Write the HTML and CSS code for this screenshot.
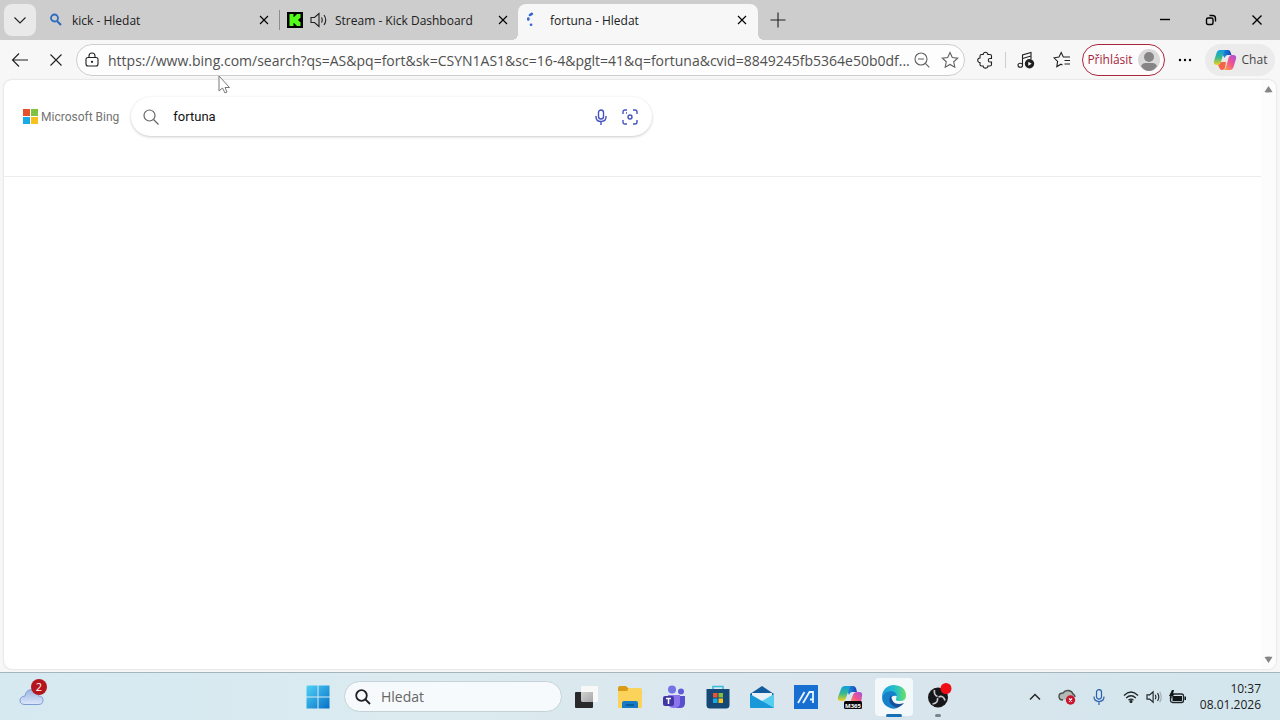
FILE: index.html
```html
<!DOCTYPE html>
<html lang="cs">
<head>
<meta charset="utf-8">
<title>fortuna - Hledat</title>
<link rel="stylesheet" href="styles.css">
</head>
<body>
<header class="tabbar">
  <button class="tab-menu" aria-label="Nabídka karet"><svg class="line" width="16" height="16" viewBox="0 0 16 16"><path d="M2.500 5.500 8 11l5.500-5.500"/></svg></button>
  <div class="tab">
    <svg class="favicon" width="16" height="16" viewBox="0 0 16 16" fill="none" stroke="#2b6cc0" stroke-width="1.800"><circle cx="6.500" cy="6" r="3.500"/><path d="m9 9 4 4" stroke-width="2.200"/></svg>
    <span class="tab-title">kick - Hledat</span>
    <button class="tab-close" aria-label="Zavřít kartu"><svg class="line" width="10" height="10" viewBox="0 0 10 10"><path d="m1 1 8 8M9 1 1 9"/></svg></button>
  </div>
  <div class="tab tab-divided">
    <svg class="favicon" width="16" height="16" viewBox="0 0 16 16"><path fill="#000" d="M0 0h16v16H0z"/><path fill="#53fc18" d="M2.500 2h4v3h1V4h1V3h1V2h4v4h-1v1h-1v2h1v1h1v4h-4v-1h-1v-1h-1v-1h-1v3h-4z"/></svg>
    <svg class="line speaker" width="18" height="16" viewBox="0 0 18 16"><path d="M1 5.500h3.500l4.500-4v13l-4.500-4H1zM11.500 5.500q1.500 2.500 0 5M14 3q3.500 5 0 10"/></svg>
    <span class="tab-title">Stream - Kick Dashboard</span>
    <button class="tab-close" aria-label="Zavřít kartu"><svg class="line" width="10" height="10" viewBox="0 0 10 10"><path d="m1 1 8 8M9 1 1 9"/></svg></button>
  </div>
  <div class="tab tab-active">
    <svg class="favicon" width="16" height="16" viewBox="0 0 16 16" fill="none" stroke="#3565d0" stroke-width="2.600" stroke-linecap="round"><path d="M4 3 5.800 1.800M2.300 6.500v1M5 12.800h.1"/></svg>
    <span class="tab-title">fortuna - Hledat</span>
    <button class="tab-close" aria-label="Zavřít kartu"><svg class="line" width="10" height="10" viewBox="0 0 10 10"><path d="m1 1 8 8M9 1 1 9"/></svg></button>
  </div>
  <button class="tab-new" aria-label="Nová karta"><svg class="line" width="16" height="16" viewBox="0 0 16 16"><path d="M8 .5v15M.5 8h15"/></svg></button>
  <div class="window-controls">
    <button aria-label="Minimalizovat"><svg class="line heavy" width="12" height="12" viewBox="0 0 12 12"><path d="M1 5.500h10"/></svg></button>
    <button aria-label="Obnovit"><svg class="line heavy" width="12" height="12" viewBox="0 0 12 12"><rect x="1.500" y="4" width="6.500" height="6.500" rx="1.500"/><path d="M4.500 1.500h3q3 0 3 3v3"/></svg></button>
    <button aria-label="Zavřít"><svg class="line heavy" width="12" height="12" viewBox="0 0 12 12"><path d="m1.500 1.500 9 9M10.500 1.500l-9 9"/></svg></button>
  </div>
</header>

<nav class="toolbar">
  <button class="tool" aria-label="Zpět"><svg class="line" width="18" height="16" viewBox="0 0 18 16"><path d="M17 8H1.500M8 1.500 1.500 8 8 14.500"/></svg></button>
  <button class="tool" aria-label="Zastavit"><svg class="line" width="14" height="14" viewBox="0 0 14 14"><path d="m1.500 1.500 11 11M12.500 1.500l-11 11"/></svg></button>
  <form class="address">
    <svg class="line" width="14" height="16" viewBox="0 0 14 16"><rect x="1" y="5.500" width="12" height="8.500" rx="2"/><path d="M4 5.500V4q0-3 3-3t3 3v1.500"/><circle cx="7" cy="9.800" r=".6" fill="currentColor"/></svg>
    <input class="address-input" aria-label="Adresa" value="https://www.bing.com/search?qs=AS&amp;pq=fort&amp;sk=CSYN1AS1&amp;sc=16-4&amp;pglt=41&amp;q=fortuna&amp;cvid=8849245fb5364e50b0df...">
    <button type="button" class="address-action" aria-label="Oddálit"><svg class="line" width="18" height="18" viewBox="0 0 18 18"><circle cx="8" cy="8" r="6"/><path d="M5 8h6M12.300 12.300l4 4"/></svg></button>
    <button type="button" class="address-action" aria-label="Přidat k oblíbeným"><svg class="line" width="18" height="18" viewBox="0 0 18 18"><path d="m9 1.500 2.300 5 5.400.6-4 3.700 1.100 5.400L9 13.500l-4.800 2.700 1.100-5.400-4-3.700 5.400-.6z"/></svg></button>
  </form>
  <button class="tool" aria-label="Rozšíření"><svg class="line" width="18" height="18" viewBox="0 0 18 18"><path d="M5.500 3.500h1.700C7 .5 12 .5 11.800 3.500H14q1.500 0 1.500 1.500v2.500H14c-2.300 0-2.300 3.500 0 3.500h1.500v2.500q0 1.500-1.500 1.500h-2.200c.2 2.800-4.800 2.800-4.600 0H5.500Q4 15 4 13.500V11.500C1 11.500 1 7 4 7V5q0-1.500 1.500-1.500z"/></svg></button>
  <span class="separator"></span>
  <button class="tool" aria-label="Média"><svg class="line" width="18" height="18" viewBox="0 0 18 18"><path d="M5.500 14V4l8.500-2.500V8M5.500 7.500 14 5"/><ellipse cx="3.300" cy="14.300" rx="2.300" ry="2"/><circle cx="12.500" cy="12.800" r="4.700" fill="currentColor" stroke="none"/><path d="m11.300 10.800 3.300 2-3.300 2z" fill="#fff" stroke="none"/></svg></button>
  <button class="tool" aria-label="Oblíbené"><svg class="line" width="18" height="18" viewBox="0 0 18 18"><path d="M11 6H10.300L8.200 1.500 6 6l-5 .8 3.600 3.600-.8 5.200L8 13.200l1.500.8M11 6h6M11.500 9.500H17M11.500 13H17"/></svg></button>
  <button class="sign-in">Přihlásit<svg width="22" height="22" viewBox="0 0 22 22"><circle cx="11" cy="11" r="11" fill="#d9d9d9"/><circle cx="11" cy="8" r="5" fill="#858585"/><path d="M3 17q1.500-3 4.500-3h7q3 0 4.500 3-3 5-8 5t-8-5z" fill="#858585"/></svg></button>
  <button class="tool" aria-label="Další"><svg width="14" height="4" viewBox="0 0 14 4"><circle cx="2" cy="2" r="1.200"/><circle cx="7" cy="2" r="1.200"/><circle cx="12" cy="2" r="1.200"/></svg></button>
  <button class="chat"><svg width="24" height="22" viewBox="0 0 24 22">
    <defs>
      <linearGradient id="cpA" x1="0" y1="0" x2="0" y2="1"><stop offset="0" stop-color="#129fe0"/><stop offset=".5" stop-color="#36b98f"/><stop offset="1" stop-color="#f2d21c"/></linearGradient>
      <linearGradient id="cpB" x1="1" y1="0" x2="0" y2="1"><stop offset="0" stop-color="#a84ee0"/><stop offset=".5" stop-color="#f0548e"/><stop offset="1" stop-color="#ffa43c"/></linearGradient>
      <linearGradient id="cpC" x1="0" y1="0" x2="1" y2="0"><stop offset="0" stop-color="#20a6e8"/><stop offset="1" stop-color="#1742b8"/></linearGradient>
    </defs>
    <path fill="url(#cpC)" d="M7 1h8q2 0 2.500 2l1 3h-4q-2 0-3 3z"/>
    <path fill="url(#cpA)" d="M7 1h5q-1 1-1.500 3L8 13q-1 3-3 3H4q-4 0-3-4l2.500-8Q4.500 1 7 1z"/>
    <path fill="#f36544" d="M5 16q2 0 3-3h5l-1 6q-1 2-3 2t-2.500-2z"/>
    <path fill="url(#cpB)" d="M17 21h-6q1.500-1 2-3L15.500 9q1-3 3-3H20q4 0 3 4l-2.500 8q-1 3-3.500 3z"/>
  </svg>Chat</button>
</nav>

<div class="page">
  <main class="results">
    <div class="search-header">
      <a class="bing-logo" href="#"><svg width="15" height="15" viewBox="0 0 15 15"><path fill="#e6512b" d="M0 0h7v7H0z"/><path fill="#80c341" d="M8 0h7v7H8z"/><path fill="#1ba8e8" d="M0 8h7v7H0z"/><path fill="#f8c21c" d="M8 8h7v7H8z"/></svg>Microsoft Bing</a>
      <form class="search-box">
        <svg class="search-glass" width="16" height="16" viewBox="0 0 16 16"><circle cx="6.500" cy="6.500" r="5.500"/><path d="m10.500 10.500 5 5"/></svg>
        <input class="search-input" aria-label="Hledaný výraz" value="fortuna">
        <button type="button" class="search-action" aria-label="Hlasové hledání"><svg width="12" height="16" viewBox="0 0 12 16"><rect x="3.500" y="1" width="5" height="9" rx="2.500"/><path d="M1 7v1q0 4.500 5 4.500T11 8V7M6 12.500V16"/></svg></button>
        <button type="button" class="search-action" aria-label="Hledat podle obrázku"><svg width="16" height="16" viewBox="0 0 16 16"><path d="M1 5V3q0-2 2-2h2M11 1h2q2 0 2 2v2M15 11v2q0 2-2 2h-2M5 15H3q-2 0-2-2v-2M4 4h1"/><circle cx="8" cy="8" r="2"/></svg></button>
      </form>
    </div>
  </main>
  <div class="scrollbar">
    <svg width="9" height="7" viewBox="0 0 9 7"><path d="M4.500 0 8.500 6q-4 1-8 0z"/></svg>
    <svg width="9" height="7" viewBox="0 0 9 7"><path d="M4.500 7 8.500 1q-4-1-8 0z"/></svg>
  </div>
</div>

<footer class="taskbar">
  <button class="widgets" aria-label="Widgety">
    <svg width="26" height="18" viewBox="0 0 26 18"><defs><linearGradient id="cloud" x1="0" y1="0" x2="0" y2="1"><stop offset="0" stop-color="#9fb4e2"/><stop offset="1" stop-color="#dbe7fa"/></linearGradient></defs><path d="M6 16.500q-5 0-5-4t5-4.500Q7 1.500 13 1.500T19.500 8q4.500 0 4.500 4.300t-5 4.200z" fill="url(#cloud)" stroke="#7f9bd2"/></svg>
    <span class="badge">2</span>
  </button>
  <div class="apps">
    <button class="app" aria-label="Start"><svg width="24" height="24" viewBox="0 0 24 24"><defs><linearGradient id="win" x1="0" y1="0" x2="1" y2="1"><stop offset="0" stop-color="#4fd2f5"/><stop offset="1" stop-color="#0670c8"/></linearGradient></defs><path fill="url(#win)" d="M1.500.5h10v11h-11v-10zM12.500.5h11v11h-11zM.5 12.500h11v11h-11zM12.500 12.500h11v11h-11z"/></svg></button>
    <label class="task-search"><svg width="16" height="16" viewBox="0 0 16 16"><circle cx="6.500" cy="6.500" r="5.300"/><path d="m10.500 10.500 4.500 4.500"/></svg><input type="text" placeholder="Hledat" aria-label="Hledat"></label>
    <button class="app" aria-label="Zobrazení úkolů"><svg width="24" height="24" viewBox="0 0 24 24"><defs><linearGradient id="tv" x1="0" y1="0" x2="1" y2="1"><stop offset="0" stop-color="#d2d2d2"/><stop offset="1" stop-color="#a5a5a5"/></linearGradient></defs><rect x="7" y="1" width="17" height="16" rx="1" fill="#f8f8f8"/><rect x="1" y="7" width="18" height="16" rx="1" fill="#29292c"/><path fill="url(#tv)" d="M7 7h12v10H8l-1-1z"/></svg></button>
    <button class="app" aria-label="Průzkumník souborů"><svg width="26" height="24" viewBox="0 0 26 24"><path fill="#d99b16" d="M1 3q0-2 2-2h6l3 3v4H1z"/><path fill="#fbd35a" d="M1 6h9l2-3h11q2 0 2 2v17q0 1-1 1H2q-1 0-1-1z"/><path fill="#1679c4" d="M5 23v-5q0-2 2-2h12q2 0 2 2v5z"/><path d="M9 20h8" stroke="#085291" stroke-width="1.500"/></svg></button>
    <button class="app" aria-label="Teams"><svg width="24" height="24" viewBox="0 0 24 24"><circle cx="10" cy="4.500" r="4" fill="#7173e6"/><circle cx="19" cy="6.500" r="3" fill="#625cdb"/><path fill="#5750cd" d="M14 11h9v7q0 5-5 5h-4z"/><path fill="#8d73ee" d="M6 10h12v8q0 5-6 5t-6-5z"/><rect x="1" y="11" width="11" height="10" rx="2" fill="#4037a5"/><path d="M4 13.500h5M6.500 13.500V19" stroke="#fff" stroke-width="1.500"/></svg></button>
    <button class="app" aria-label="Microsoft Store"><svg width="24" height="24" viewBox="0 0 24 24"><path d="M7 5V1.500h10V5" fill="none" stroke="#35bde0" stroke-width="1.500"/><path fill="#164875" d="M.5 4h23v16q0 3.500-3.500 3.500H4Q.5 23.500.5 20z"/><path fill="#f05132" d="M7 8h4.500v4.500H7z"/><path fill="#82bd3c" d="M12.500 8H17v4.500h-4.500z"/><path fill="#19a8e9" d="M7 13.500h4.500V18H7z"/><path fill="#fcc51b" d="M12.500 13.500H17V18h-4.500z"/></svg></button>
    <button class="app" aria-label="Pošta"><svg width="26" height="24" viewBox="0 0 26 24"><path fill="#145b9e" d="m13 1 12 8v4H1V9z"/><path fill="#e9f1f6" d="M3 8h20v7H3z"/><path fill="#55cdf0" d="M25 9v14H1l12-7z"/><path fill="#1898d8" d="m1 9 24 14H2q-1 0-1-1z"/></svg></button>
    <button class="app" aria-label="MyASUS"><svg width="24" height="24" viewBox="0 0 24 24"><path fill="#1770d1" d="M0 0h24v24H0z"/><path d="m4 18 6.500-11M9 18l6.500-11H19v11M16 14.500h3" fill="none" stroke="#e9f5ff" stroke-width="1.800"/></svg></button>
    <button class="app" aria-label="Microsoft 365"><svg width="26" height="24" viewBox="0 0 26 24"><path fill="url(#cpC)" d="M8 1h8q2 0 3 2l1 4h-5q-2 0-3 3z"/><path fill="url(#cpA)" d="M8 1h6q-2 1-2 3l-3 9q-1 3-4 3H4q-4 0-3-4l3-8q1-3 4-3z"/><path fill="url(#cpB)" d="M12 18q2-1 2-3l2-5q1-3 4-3h2q4 0 3 4l-1 7z"/><rect x="7" y="16" width="18" height="8" rx="1.500" fill="#08080b"/><text x="16" y="22.500" text-anchor="middle" class="app-caption">M365</text></svg></button>
    <button class="app app-current" aria-label="Microsoft Edge"><svg width="26" height="24" viewBox="0 0 26 24"><defs><linearGradient id="edge" x1="0" y1="0" x2="1" y2="0"><stop offset="0" stop-color="#189fe2"/><stop offset=".6" stop-color="#2bc3c5"/><stop offset="1" stop-color="#6be060"/></linearGradient></defs><path fill="url(#edge)" d="M1 12C1 5 6 0 13 0q12 1 12 11 0 5-6 5-5 0-4-2 2-5-3-7Q4 5 1 12z"/><path fill="#1481c9" d="M1 12q2-6 8-6 6 0 7 5-7-1-6 5 1 7 8 6-4 3-9 1Q1 20 1 12z"/><path fill="#174f9e" d="M10 10q-4 7 2 11 5 4 11-3-12 4-13-8z"/></svg></button>
    <button class="app app-open" aria-label="OBS Studio"><svg width="28" height="28" viewBox="0 0 28 28"><circle cx="14" cy="14.500" r="10" fill="#171719"/><path d="M10.500 7q-1 5 3 6.500M14.500 14q5-2 6.500 3.500M13.500 15q1 5-5 6" fill="none" stroke="#c9c9cc" stroke-width="1.700"/><circle cx="22" cy="5.500" r="5.500" fill="#f10d15"/></svg></button>
  </div>
  <div class="tray">
    <button aria-label="Skryté ikony"><svg class="line" width="12" height="8" viewBox="0 0 12 8"><path d="m1 6.500 5-5 5 5" stroke-width="1.400"/></svg></button>
    <button aria-label="OneDrive"><svg width="18" height="16" viewBox="0 0 18 16"><path d="M5 11q-4 0-4-3.500T5 4q2-3 5.500-2.500T15 5q2 1 2 3" fill="#b5b9b4" stroke="#48504d" stroke-width="1.400"/><circle cx="12.500" cy="11" r="4.700" fill="#c91530"/><path d="m11 9.500 3 3m0-3-3 3" stroke="#fff" stroke-width="1.200"/></svg></button>
    <button aria-label="Mikrofon"><svg width="12" height="16" viewBox="0 0 12 16" fill="none" stroke="#285fae" stroke-width="1.200"><rect x="3.500" y=".6" width="5" height="9.500" rx="2.500"/><path d="M1 7.500q0 5 5 5t5-5M6 12.500V16"/></svg></button>
    <button class="tray-status" aria-label="Síť, zvuk a baterie">
      <svg width="16" height="12" viewBox="0 0 16 12" fill="none" stroke="#202628" stroke-width="1.300"><path d="M1 4.500q7-7 14 0M3.200 7q4.800-4.500 9.600 0M5.500 9.200q2.500-2 5 0"/><circle cx="8" cy="10.500" r=".9" fill="#202628"/></svg>
      <svg width="16" height="14" viewBox="0 0 18 16" fill="none" stroke="#202628" stroke-width="1.300"><path d="M1 5.500h3l4-3.500v12l-4-3.500H1zM10.500 5.500q1.500 2.500 0 5M13 3.500q3 4.500 0 9"/><path d="M15.500 2q3.500 6 0 12" stroke="#9fb0b5"/></svg>
      <svg width="18" height="14" viewBox="0 0 18 14"><rect x="1.500" y="4" width="13" height="8.500" rx="2" fill="none" stroke="#202628" stroke-width="1.300"/><path fill="#111718" d="M3.500 6h9.500v5h-9.500zM15.500 6.500h1.500v3.500h-1.500zM3 0 0 6h2.500L2 9l3.500-5H4L5 0z"/></svg>
    </button>
    <button class="clock"><span>10:37</span><span>08.01.2026</span></button>
  </div>
</footer>
<svg class="pointer" width="12" height="19" viewBox="0 0 12 19"><path d="M1 1v15l3.500-3 2.500 5 2-1-2-4.500h4.500z"/></svg>
</body>
</html>
```
FILE: styles.css
```css
* { box-sizing: border-box; }
body {
  margin: 0;
  min-height: 100vh;
  display: flex;
  flex-direction: column;
  background: #f7f7f7;
  color: #202020;
  font: 12px/16px "Open Sans", "Noto Sans", sans-serif;
}
button, input { font: inherit; color: inherit; border: 0; padding: 0; background: none; }
input { outline: 0; min-width: 0; height: 24px; }
button {
  display: flex;
  align-items: center;
  justify-content: center;
  flex-shrink: 0;
}
svg { flex-shrink: 0; }
.line { fill: none; stroke: currentColor; stroke-width: 1.1; }
.heavy { stroke: #000; stroke-width: 1.4; }

.tabbar { display: flex; height: 40px; padding-left: 4px; background: #cdcdcd; }
.tab-menu { width: 32px; height: 32px; margin: 4px 4px 0 0; border-radius: 8px; background: #e9e9e9; }
.tab {
  position: relative;
  flex: 0 1 239px;
  min-width: 0;
  display: flex;
  align-items: center;
  gap: 8px;
  height: 36px;
  margin-top: 4px;
  padding: 0 7px 4px 8px;
}
.tab-title { flex: 1; overflow: hidden; white-space: nowrap; padding-top: 2px; }
.tab-close { width: 16px; height: 16px; color: #000; }
.tab-divided { gap: 7px; }
.tab-divided::before {
  content: "";
  position: absolute;
  left: 0;
  top: 6px;
  width: 1px;
  height: 20px;
  background: #8d8d8d;
}
.tab-active { flex-basis: 240px; background: #f7f7f7; border-radius: 8px 8px 0 0; padding-right: 8px; }
.tab-active::before, .tab-active::after {
  content: "";
  position: absolute;
  bottom: 0;
  width: 6px;
  height: 6px;
}
.tab-active::before { right: 100%; background: radial-gradient(circle at 0 0, #cdcdcd 6px, #f7f7f7 6px); }
.tab-active::after { left: 100%; background: radial-gradient(circle at 100% 0, #cdcdcd 6px, #f7f7f7 6px); }
.tab-new { width: 40px; height: 40px; }
.window-controls { display: flex; margin-left: auto; }
.window-controls button { width: 46px; height: 40px; }

.toolbar { display: flex; align-items: center; gap: 4px; height: 40px; padding: 0 5px 0 4px; }
.tool { width: 32px; height: 32px; }
.address {
  flex: 1;
  min-width: 0;
  display: flex;
  align-items: center;
  height: 32px;
  padding: 0 5px 0 8px;
  border: 1px solid #cecece;
  border-radius: 16px;
  background: #fdfdfd;
}
.address-input { flex: 1; margin-left: 9px; font-size: 14px; color: #505050; }
.address-action { width: 18px; height: 30px; color: #606060; }
.address-action + .address-action { margin-left: 10px; }
.separator { width: 1px; height: 16px; background: #cfcfcf; }
.sign-in {
  gap: 5px;
  height: 32px;
  width: 83px;
  border: 1px solid #a8283f;
  border-radius: 16px;
  color: #a4243b;
  background: #fdfbfb;
}
.chat { width: 70px; height: 32px; gap: 5px; border-radius: 16px; background: #ebebeb; color: #444; }

.page {
  flex: 1;
  display: flex;
  margin: 0 4px 3px;
  border-radius: 8px;
  background: #fff;
  box-shadow: 0 0 2px #c4c4c4;
}
.results { flex: 1; min-width: 0; }
.search-header {
  display: flex;
  align-items: flex-start;
  gap: 12px;
  height: 97px;
  padding: 17px 19px 0;
  border-bottom: 1px solid #ececec;
}
.bing-logo {
  display: flex;
  align-items: center;
  gap: 3px;
  height: 39px;
  color: #737373;
  font-family: Roboto, sans-serif;
  text-decoration: none;
  white-space: nowrap;
}
.search-box {
  flex: 0 1 521px;
  min-width: 0;
  display: flex;
  align-items: center;
  height: 39px;
  padding: 0 8px 0 12px;
  border-radius: 20px;
  background: #fff;
  box-shadow: 0 1px 3px #cacaca;
}
.search-glass { fill: none; stroke: #666; stroke-width: 1.2; }
.search-input { flex: 1; margin-left: 14px; font-family: Roboto, sans-serif; font-size: 13px; color: #111; }
.search-action { width: 29px; height: 32px; }
.search-action svg { fill: none; stroke: #4553be; stroke-width: 1.4; }
.scrollbar {
  width: 15px;
  display: flex;
  flex-direction: column;
  justify-content: space-between;
  align-items: center;
  padding: 6px 0;
  border-radius: 0 8px 8px 0;
  background: #fcfcfc;
  fill: #858585;
}

.taskbar {
  display: grid;
  grid-template-columns: 1fr auto 1fr;
  height: 48px;
  border-top: 1px solid #a5b5bb;
  background: linear-gradient(90deg, #d6e9f1, #dbebf0 35%, #dae5ed 65%, #d3e6ed);
}
.widgets { position: relative; width: 48px; margin-left: 8px; }
.badge {
  position: absolute;
  left: 23px;
  top: 6px;
  width: 16px;
  height: 16px;
  border-radius: 50%;
  background: #b5161e;
  color: #fff;
  font-size: 11px;
}
.apps { display: flex; align-items: center; margin-right: 24px; }
.app { position: relative; width: 44px; height: 44px; }
.task-search {
  display: flex;
  align-items: center;
  gap: 10px;
  width: 218px;
  height: 31px;
  margin: 0 2px 0 4px;
  padding: 0 10px;
  border: 1px solid #c5d3d8;
  border-radius: 16px;
  background: #f6fafc;
}
.task-search svg { fill: none; stroke: #202020; stroke-width: 1.8; }
.task-search input { flex: 1; font-size: 14px; }
.task-search input::placeholder { color: #666; opacity: 1; }
.app-caption { fill: #fff; font: bold 6px "Open Sans", sans-serif; }
.app-current::before {
  content: "";
  position: absolute;
  inset: 3px;
  border-radius: 4px;
  background: #f3f8fb;
}
.app-current svg { position: relative; }
.app-current::after, .app-open::after {
  content: "";
  position: absolute;
  bottom: 2px;
  left: 14px;
  width: 16px;
  height: 3px;
  border-radius: 2px;
  background: #176eb4;
}
.app-open::after { left: 19px; width: 6px; background: #7b8489; }
.tray { display: flex; justify-content: flex-end; padding-right: 19px; }
.tray button { width: 32px; }
.tray .tray-status { width: 72px; gap: 7px; justify-content: flex-end; }
.tray .clock { flex-direction: column; align-items: flex-end; width: 74px; }
.pointer { position: absolute; left: 218px; top: 75px; fill: #fff; stroke: #777; }
```
